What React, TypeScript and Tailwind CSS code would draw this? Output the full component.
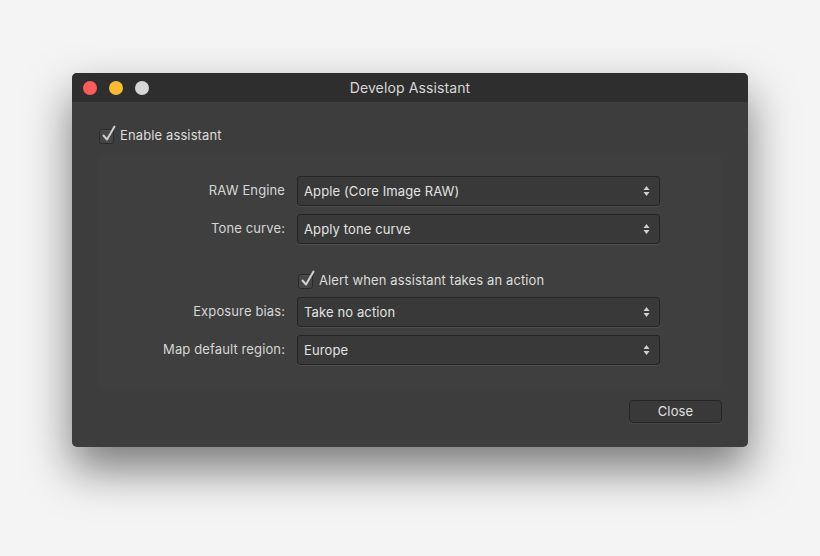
import React from "react";

const font = { fontFamily: "Inter, 'Noto Sans', sans-serif", letterSpacing: "0.12px" };

function Check({ label }: { label: string }) {
  return (
    <div className="flex items-center gap-[6px]">
      <div className="relative w-[15px] h-[15px] rounded-[3px] border border-[#2a2a2a] bg-[#464646] shadow-[inset_0_1px_0_rgba(255,255,255,0.06)]">
        <svg
          className="absolute left-[1px] -top-[5px]"
          width="16"
          height="18"
          viewBox="0 0 16 18"
          fill="none"
        >
          <path
            d="M2.5 10.5 L6 14.5 L13.5 1.5"
            stroke="#cfcfcf"
            strokeWidth="2"
            strokeLinecap="round"
            strokeLinejoin="round"
          />
        </svg>
      </div>
      <span className="text-[13px] text-[#dcdcdc]">{label}</span>
    </div>
  );
}

function Select({ value }: { value: string }) {
  return (
    <div className="flex items-center justify-between w-[363px] h-[30px] rounded-[3px] border border-[#252525] bg-[#393939] shadow-[0_1px_0_rgba(255,255,255,0.08)] pl-[6px] pr-[9px]">
      <span className="text-[13px] text-[#e2e2e2] pt-[2px]">{value}</span>
      <svg width="7" height="14" viewBox="0 0 7 14">
        <path d="M3.5 2 L6.5 6 L0.5 6 Z" fill="#d0d0d0" />
        <path d="M0.5 8 L6.5 8 L3.5 12 Z" fill="#d0d0d0" />
      </svg>
    </div>
  );
}

function Row({ label, value }: { label: string; value: string }) {
  return (
    <div className="flex items-center">
      <div className="w-[189px] pr-[1px] text-right text-[13px] text-[#d6d6d6]">
        {label}
      </div>
      <div className="ml-[11px]">
        <Select value={value} />
      </div>
    </div>
  );
}

export default function App() {
  return (
    <div className="w-[820px] h-[556px] bg-[#f4f4f4] pt-[73px] pl-[72px]" style={font}>
      <div className="w-[676px] h-[374px] rounded-[5px] bg-[#3d3d3d] overflow-hidden shadow-[0_22px_45px_rgba(0,0,0,0.5)] flex flex-col">
        <div className="relative h-[29px] bg-[#2e2e2e] flex items-center">
          <div className="flex items-center gap-[12px] pl-[11px]">
            <div className="w-[14px] h-[14px] rounded-full bg-[#fc5b57]" />
            <div className="w-[14px] h-[14px] rounded-full bg-[#fdbc2f]" />
            <div className="w-[14px] h-[14px] rounded-full bg-[#d6d6d6]" />
          </div>
          <div className="absolute inset-0 flex items-center justify-center text-[14px] text-[#d8d8d8] pb-[1px]">
            Develop Assistant
          </div>
        </div>
        <div className="flex-1 flex flex-col pl-[25px] pr-[26px]">
          <div className="mt-[26px] ml-[2px] h-[16px] flex items-center">
            <Check label="Enable assistant" />
          </div>
          <div className="mt-[11px] h-[233px] rounded-[4px] bg-[#3f3f3f] pt-[21px] flex flex-col">
            <div className="flex flex-col gap-[8px]">
              <Row label="RAW Engine" value="Apple (Core Image RAW)" />
              <Row label="Tone curve:" value="Apply tone curve" />
            </div>
            <div className="mt-[29px] ml-[201px] h-[16px] flex items-center">
              <Check label="Alert when assistant takes an action" />
            </div>
            <div className="mt-[8px] flex flex-col gap-[8px]">
              <Row label="Exposure bias:" value="Take no action" />
              <Row label="Map default region:" value="Europe" />
            </div>
          </div>
          <div className="mt-[12px] flex justify-end">
            <div className="w-[93px] h-[23px] rounded-[4px] border border-[#252525] bg-[#393939] shadow-[0_1px_0_rgba(255,255,255,0.06)] flex items-center justify-center text-[13px] text-[#e0e0e0]">
              Close
            </div>
          </div>
        </div>
      </div>
    </div>
  );
}
